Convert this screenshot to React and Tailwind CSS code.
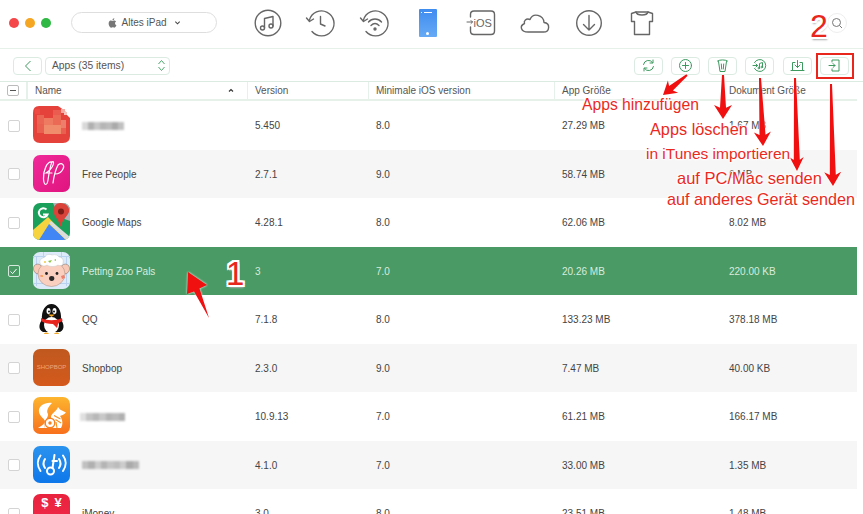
function Check({ checked }) {
  return (
    <div className={`w-[12px] h-[12px] rounded-[2px] border flex items-center justify-center ${checked ? "border-[#d7e8dd]" : "border-[#d4d4d4] bg-white"}`}>
      {checked && (
        <svg width="9" height="9" viewBox="0 0 9 9" fill="none" stroke="#fff" strokeWidth="1"><path d="M1.500 4.500 L3.600 6.600 L7.500 2" /></svg>
      )}
    </div>
  );
}

function Blur({ w, ml = 0, shades }) {
  return (
    <div className="h-[8px] flex blur-[1px]" style={{ width: w, marginLeft: ml }}>
      {shades.map((c, i) => (
        <div key={i} className="flex-1" style={{ background: c }} />
      ))}
    </div>
  );
}

const PixelIcon = () => (
  <svg viewBox="0 0 37 37" className="w-full h-full">
    <path d="M6 0H25L28 2L32 5L34 9L37 12V30Q37 37 30 37H7Q0 37 0 30V7Q0 0 6 0Z" fill="#e5423c" />
    <rect x="2" y="3" width="5" height="5" fill="#ee4a44" />
    <rect x="4" y="9" width="7" height="9" fill="#ea6553" />
    <rect x="4" y="18" width="7" height="9" fill="#e96050" />
    <rect x="11" y="12" width="9" height="7" fill="#ee7a62" />
    <rect x="20" y="9" width="8" height="10" fill="#ea6a56" />
    <rect x="11" y="19" width="18" height="9" fill="#f08c6c" />
    <rect x="28" y="14" width="5" height="8" fill="#ee7e6c" />
    <rect x="28" y="22" width="5" height="6" fill="#e96050" />
    <rect x="20" y="4" width="8" height="5" fill="#ea5b50" />
    <rect x="28" y="3" width="4" height="4" fill="#f4aaa0" />
    <rect x="31" y="6" width="3" height="3" fill="#f6c2bb" />
  </svg>
);
const FreePeople = () => (
  <svg viewBox="0 0 37 37" className="w-full h-full">
    <defs><linearGradient id="fp" x1="0" y1="0" x2="1" y2="1"><stop offset="0" stopColor="#f02a9a" /><stop offset="1" stopColor="#e0147f" /></linearGradient></defs>
    <rect width="37" height="37" rx="7" fill="url(#fp)" />
    <path d="M19 7C14 6 10 16 10.500 24C11 31 14 31 15 25C16 18 17 11 19 7C22 5 21 13 13 18H19M20 28C21 20 23 14 25 10C29 7 32 10 30 14C28 18 24 19 22 19" fill="none" stroke="#fff" strokeWidth="1.200" strokeLinecap="round" />
  </svg>
);
const GMaps = () => (
  <svg viewBox="0 0 37 37" className="w-full h-full">
    <defs><clipPath id="gm"><rect width="37" height="37" rx="7" /></clipPath></defs>
    <g clipPath="url(#gm)">
      <rect width="37" height="37" fill="#1ba05c" />
      <path d="M0 37V27L15 14L37 37Z" fill="#f6d33f" />
      <path d="M6 37L16 21L33 37Z" fill="#4285f4" />
      <path d="M18 18L37 34V37H33L16 20Z" fill="#dcdcdc" />
      <path d="M20 0H37V18L26 14Z" fill="#aeb4b8" />
      <path d="M27.500 0C22 0 20 5 20.500 9C21.500 14 26 17 27.500 24C29 17 34 14 36 9C37 4 33 0 27.500 0Z" fill="#d9433a" />
      <circle cx="28" cy="8.500" r="3" fill="#7c1d18" />
      <path d="M13.500 6.500A4.500 4.500 0 1 0 14.500 11.500H10" fill="none" stroke="#fff" strokeWidth="2" />
    </g>
  </svg>
);
const Sheep = () => (
  <svg viewBox="0 0 37 37" className="w-full h-full">
    <rect width="37" height="37" rx="7" fill="#dceafa" />
    <path d="M3 4h1v30H3zM10 0h1v8h-1zM28 0h1v8h-1zM33 4h1v30h-1zM0 31h37v1H0zM0 4h37v1H0z" fill="#b8d2f0" />
    <ellipse cx="5" cy="17" rx="4.500" ry="5" fill="#f7c8b6" stroke="#6b5b50" strokeWidth="0.400" transform="rotate(-25 5 17)" />
    <ellipse cx="32" cy="17" rx="4.500" ry="5" fill="#f7c8b6" stroke="#6b5b50" strokeWidth="0.400" transform="rotate(25 32 17)" />
    <ellipse cx="18.500" cy="22" rx="13.500" ry="12.500" fill="#fbcfbf" stroke="#8a7468" strokeWidth="0.400" />
    <path d="M7 11C6 7 10 6 12 5C13 2 17 2 19 3C22 2 25 3 26 5C29 5 31 8 30 11C30 14 26 14 25 13C22 15 17 15 14 13C11 15 8 14 7 11Z" fill="#fff" stroke="#bbb" strokeWidth="0.400" />
    <circle cx="13.500" cy="21.500" r="1.400" fill="#222" />
    <circle cx="24" cy="21.500" r="1.400" fill="#222" />
    <ellipse cx="18.700" cy="26.500" rx="2.600" ry="2.400" fill="#2a2a2a" />
    <path d="M6 24l3-1 1 2zM28 24l3-1 1 3-3 1z" fill="#ef7f6c" />
    <path d="M15 9l2 2 2-3zM21 8l2 1 0-2z" fill="#8bc34a" />
    <circle cx="12" cy="10" r="1" fill="#f3c744" />
    <circle cx="9" cy="24" r="1" fill="#f3a744" />
  </svg>
);
const QQ = () => (
  <svg viewBox="0 0 37 37" className="w-full h-full">
    <rect width="37" height="37" rx="7" fill="#fff" />
    <path d="M10 32C4 29 7 22 9 20C8 10 13 4 18.500 4C24 4 29 10 28 20C30 22 33 29 27 32Z" fill="#111" />
    <ellipse cx="18.500" cy="25" rx="7.500" ry="8" fill="#fff" />
    <ellipse cx="15.500" cy="11" rx="2" ry="3" fill="#fff" />
    <ellipse cx="21.500" cy="11" rx="2" ry="3" fill="#fff" />
    <circle cx="16" cy="11.500" r="1" fill="#111" />
    <circle cx="21" cy="11.500" r="1" fill="#111" />
    <path d="M15 14.500H22L18.500 17Z" fill="#f5a623" />
    <path d="M8 18C14 21 23 21 29 18L29.500 21C25 23 25 24 25 24L24 28L20 24C15 24 11 23 8 21Z" fill="#e8251f" />
    <path d="M11 34C11 32 15 32 16 34ZM21 34C22 32 26 32 26 34Z" fill="#f5a623" />
  </svg>
);
const Shopbop = () => (
  <div className="w-full h-full rounded-[7px] bg-gradient-to-b from-[#c0591f] to-[#d4591c] flex items-center justify-center text-[6px] text-[#eda67c] font-['Liberation_Sans',sans-serif]">SHOPBOP</div>
);
const UC = () => (
  <svg viewBox="0 0 37 37" className="w-full h-full">
    <defs><linearGradient id="uc" x1="0" y1="0" x2="0" y2="1"><stop offset="0" stopColor="#fdb52e" /><stop offset="1" stopColor="#f8701d" /></linearGradient></defs>
    <rect width="37" height="37" rx="7" fill="url(#uc)" />
    <path d="M19 6C12 5 5 9 6 15C7 20 11 21 12 24C12 27 8 29 5 31H12C9 26 16 20 15 17C13 14 15 10 19 6Z" fill="#fff" />
    <path d="M18 19C20 15 24 14 25 10L27 12.500L33 15.500C31 18 28 18.500 27 19C30 23 30 28 28 31H12C10 27 13 22 18 22Z" fill="#fff" />
    <circle cx="17" cy="26" r="4.800" fill="#fff" stroke="#f8801f" strokeWidth="1.400" />
    <circle cx="17" cy="26" r="1.700" fill="#f8801f" />
    <path d="M21 18.500L27.500 22M22.500 22.500L28 26M23 25L24 31" stroke="#f8901f" strokeWidth="1.100" />
  </svg>
);
const Wifi = () => (
  <svg viewBox="0 0 37 37" className="w-full h-full">
    <defs><linearGradient id="wf" x1="0" y1="0" x2="0" y2="1"><stop offset="0" stopColor="#2a92ee" /><stop offset="1" stopColor="#0f78ea" /></linearGradient></defs>
    <rect width="37" height="37" rx="7" fill="url(#wf)" />
    <g fill="none" stroke="#fff" strokeWidth="2" strokeLinecap="round">
      <circle cx="17.500" cy="25" r="3.500" />
      <path d="M19.500 22L21.500 9M19.500 15H24" />
      <path d="M12 13C10 16 10 19 12 22M7.500 9.500C4 14 4 20 7.500 25M26 13C28 16 28 19 26 22M30 9.500C33.500 14 33.500 20 30 25" />
    </g>
  </svg>
);
const IMoney = () => (
  <div className="w-full h-full rounded-[7px] bg-gradient-to-b from-[#e9223e] to-[#f02a4a] flex justify-center gap-[6px] pt-[1px] text-white font-bold text-[13px] leading-[15px] font-['Liberation_Sans',sans-serif]"><span>$</span><span>¥</span></div>
);

const rows = [
  { icon: <PixelIcon />, blur: <Blur w={42} shades={["#d8d8d8", "#b0b0b0", "#c8c8c8", "#b5b5b5", "#bcbcbc", "#aaaaaa", "#c0c0c0"]} />, v: "5.450", m: "8.0", a: "27.29 MB", d: "1.67 MB" },
  { icon: <FreePeople />, name: "Free People", v: "2.7.1", m: "9.0", a: "58.74 MB", d: "6 MB", alt: true },
  { icon: <GMaps />, name: "Google Maps", v: "4.28.1", m: "8.0", a: "62.06 MB", d: "8.02 MB" },
  { icon: <Sheep />, name: "Petting Zoo Pals", v: "3", m: "7.0", a: "20.26 MB", d: "220.00 KB", sel: true },
  { icon: <QQ />, name: "QQ", v: "7.1.8", m: "8.0", a: "133.23 MB", d: "378.18 MB" },
  { icon: <Shopbop />, name: "Shopbop", v: "2.3.0", m: "9.0", a: "7.47 MB", d: "40.00 KB", alt: true },
  { icon: <UC />, blur: <Blur w={45} ml={-2} shades={["#e0e0e0", "#c4c4c4", "#b8b8b8", "#c8c8c8", "#b4b4b4", "#bcbcbc", "#b0b0b0"]} />, v: "10.9.13", m: "7.0", a: "61.21 MB", d: "166.17 MB" },
  { icon: <Wifi />, blur: <Blur w={57} shades={["#c0c0c0", "#b0b0b0", "#cccccc", "#b4b4b4", "#c4c4c4", "#bcbcbc", "#cccccc", "#aaaaaa", "#b8b8b8"]} />, v: "4.1.0", m: "7.0", a: "33.00 MB", d: "1.35 MB", alt: true },
  { icon: <IMoney />, name: "iMoney", v: "3.0", m: "8.0", a: "23.51 MB", d: "1.48 MB" },
];

const Stroke = ({ children }) => (
  <svg width="32" height="32" viewBox="0 0 32 32" fill="none" stroke="#666" strokeWidth="1.400" strokeLinecap="round" strokeLinejoin="round">{children}</svg>
);

const TopSlot = ({ children }) => (
  <div className="w-[53.500px] shrink-0 flex items-center justify-center">{children}</div>
);

function TopIcons() {
  return (
    <div className="flex items-center ml-[24px]">
      <TopSlot><Stroke>
        <circle cx="16" cy="16" r="12.800" />
        <path d="M12.500 21V11.500L21 9.500V19" />
        <circle cx="10.500" cy="21" r="2" /><circle cx="19" cy="19" r="2" />
      </Stroke></TopSlot>
      <TopSlot><Stroke>
        <path d="M4.500 13A12.500 12.500 0 1 1 7 24.500" /><path d="M1.500 11L4.500 14.500L8.500 12" />
        <path d="M15.500 9.500V17L20 19" />
      </Stroke></TopSlot>
      <TopSlot><Stroke>
        <path d="M4.500 13A12.500 12.500 0 1 1 7 24.500" /><path d="M1.500 11L4.500 14.500L8.500 12" />
        <path d="M9.500 15C13 11 19 11 22.500 15M12 18.500C14.500 16 17.500 16 20 18.500" />
        <circle cx="16" cy="22" r="1" fill="#666" />
      </Stroke></TopSlot>
      <TopSlot>
        <div className="w-[18px] h-[28px] rounded-[1px] bg-gradient-to-b from-[#3f8cf0] to-[#66aaf5] relative">
          <div className="absolute top-[3px] left-[5px] w-[8px] h-[1px] bg-white" />
          <div className="absolute top-[3px] left-[2px] w-[1px] h-[1px] bg-white" />
          <div className="absolute bottom-[2px] left-[7px] w-[3px] h-[3px] rounded-full bg-white" />
        </div>
      </TopSlot>
      <TopSlot><Stroke>
        <path d="M4.500 10V7.500Q4.500 4 8 4H25Q28.500 4 28.500 7.500V24Q28.500 27.500 25 27.500H8Q4.500 27.500 4.500 24V20" />
        <path d="M1 15H6.500M5 13.500L6.500 15L5 16.500" strokeWidth="1" />
        <text x="7.500" y="19.500" fill="#666" stroke="none" fontSize="11" fontFamily="Liberation Sans">iOS</text>
      </Stroke></TopSlot>
      <TopSlot><Stroke>
        <path d="M9 25H24.500C31 25 31.500 16 25 15.500C24.500 8 14 5 11 12.500C7 11 4.500 14 5.500 16.500C0 19 2 25 9 25Z" />
      </Stroke></TopSlot>
      <TopSlot><Stroke>
        <circle cx="16" cy="16" r="12.300" />
        <path d="M16 8.500V23M10.500 17.500L16 23L21.500 17.500" />
      </Stroke></TopSlot>
      <TopSlot><Stroke>
        <path d="M10 5H22L26.500 6.500V14.500H23.500V27.500H8.500V14.500H5.500V6.500Z" />
        <path d="M10 5C11 9 21 9 22 5" />
      </Stroke></TopSlot>
    </div>
  );
}

const G = "#3c9a5f";
const ToolBtn = ({ children }) => (
  <div className="w-[29px] h-[18px] rounded-[4px] border border-[#dcebe2] bg-white flex items-center justify-center shrink-0">
    {children}
  </div>
);
const Gs = ({ children }) => (
  <svg width="15" height="15" viewBox="0 0 15 15" fill="none" stroke={G} strokeWidth="1" strokeLinecap="round" strokeLinejoin="round">{children}</svg>
);

const Label = ({ x, y, size, children }) => (
  <div className="absolute whitespace-nowrap text-[#ea2a1e] leading-[18px] [text-shadow:0_0_2px_#fff,1px_1px_2px_#fff,-1px_-1px_2px_#fff,1px_-1px_2px_#fff,-1px_1px_2px_#fff]" style={{ left: x, top: y, fontSize: size }}>{children}</div>
);

const arrow = (x1, y1, x2, y2, w0, w1, hw, hl) => {
  const dx = x2 - x1, dy = y2 - y1, l = Math.hypot(dx, dy), ux = dx / l, uy = dy / l, nx = -uy, ny = ux;
  const bx = x2 - ux * hl, by = y2 - uy * hl;
  const ix = x2 - ux * hl * 0.8, iy = y2 - uy * hl * 0.8;
  const pt = (x, y) => `${x.toFixed(1)} ${y.toFixed(1)}`;
  return `M${pt(x1 + (nx * w0) / 2, y1 + (ny * w0) / 2)}L${pt(ix + (nx * w1) / 2, iy + (ny * w1) / 2)}L${pt(bx + nx * hw, by + ny * hw)}L${pt(x2, y2)}L${pt(bx - nx * hw, by - ny * hw)}L${pt(ix - (nx * w1) / 2, iy - (ny * w1) / 2)}L${pt(x1 - (nx * w0) / 2, y1 - (ny * w0) / 2)}Z`;
};

const bigShadow = "[text-shadow:2px_0_0_#fff,-2px_0_0_#fff,0_2px_0_#fff,0_-2px_0_#fff,2px_2px_0_#fff,-2px_-2px_0_#fff,2px_-2px_0_#fff,-2px_2px_0_#fff,1px_3px_2px_#aaa]";

export default function App() {
  return (
    <div className="w-[863px] h-[514px] overflow-hidden bg-white relative text-[#444] font-['Liberation_Sans',sans-serif] flex flex-col">
      {/* top bar */}
      <div className="h-[49px] shrink-0 flex items-center pl-[9px] pr-[16px] pb-[3px] border-b border-[#e6f1ea]">
        <div className="flex gap-[6px]">
          <div className="w-[10px] h-[10px] rounded-full bg-[#f5474a]" />
          <div className="w-[10px] h-[10px] rounded-full bg-[#f5a623]" />
          <div className="w-[10px] h-[10px] rounded-full bg-[#2fb843]" />
        </div>
        <div className="ml-[20px] w-[146px] h-[21px] rounded-full border border-[#dedede] flex items-center justify-center gap-[3px] text-[10px] text-[#555]">
          <svg width="11" height="12" viewBox="0 0 24 24" fill="#777"><path d="M17.500 12.500c0-2.600 2.100-3.800 2.200-3.900-1.200-1.800-3.100-2-3.700-2-1.600-.2-3.100.9-3.900.9s-2.100-.9-3.400-.9c-1.700 0-3.400 1-4.300 2.600-1.800 3.200-.5 7.900 1.300 10.500.9 1.300 1.900 2.700 3.300 2.600 1.300-.1 1.800-.8 3.400-.8s2 .8 3.400.8 2.300-1.300 3.200-2.600c1-1.500 1.400-2.900 1.400-3-.1 0-2.900-1.100-2.900-4.200zM14.900 4.700c.7-.9 1.200-2.100 1.100-3.300-1 0-2.300.7-3 1.500-.7.800-1.300 2-1.100 3.200 1.100.1 2.300-.6 3-1.400z" /></svg>
          <span>Altes iPad</span>
          <svg width="7" height="7" viewBox="0 0 8 8" fill="none" stroke="#444" strokeWidth="1.200" className="ml-[4px]"><path d="M1.500 3L4 5.500L6.500 3" /></svg>
        </div>
        <TopIcons />
        <div className="ml-auto w-[20px] h-[20px] rounded-full border border-[#eee] flex items-center justify-center">
          <svg width="12" height="12" viewBox="0 0 12 12" fill="none" stroke="#777" strokeWidth="1"><circle cx="5.500" cy="5.500" r="4" /><path d="M8.500 8.500L11 11" /></svg>
        </div>
      </div>

      {/* second bar */}
      <div className="h-[33px] shrink-0 flex items-center pl-[13px] pr-[14px] pt-[1px] border-b border-[#dcebe2]">
        <div className="w-[29px] h-[18px] rounded-[4px] border border-[#dcebe2] flex items-center justify-center">
          <svg width="8" height="12" viewBox="0 0 8 12" fill="none" stroke={G} strokeWidth="1"><path d="M6.500 1L1.500 6L6.500 11" /></svg>
        </div>
        <div className="ml-[3px] w-[125px] h-[18px] rounded-[4px] border border-[#dcebe2] flex items-center justify-between pl-[6px] pr-[3px] text-[10.300px] text-[#555]">
          <span>Apps (35 items)</span>
          <svg width="9" height="13" viewBox="0 0 9 13" fill="none" stroke={G} strokeWidth="0.900"><path d="M1.500 5L4.500 1.500L7.500 5M1.500 8L4.500 11.500L7.500 8" /></svg>
        </div>
        <div className="ml-auto flex gap-[8.300px]">
          <ToolBtn><Gs><path d="M2.500 6.500A5 5 0 0 1 11.500 4.500M12.500 8.500A5 5 0 0 1 3.500 10.500" /><path d="M12 2V5H9M3 13V10H6" /></Gs></ToolBtn>
          <ToolBtn><Gs><circle cx="7.500" cy="7.500" r="6" /><path d="M7.500 4.500V10.500M4.500 7.500H10.500" /></Gs></ToolBtn>
          <ToolBtn><Gs><path d="M2.500 3C5 1.500 10 1.500 12.500 3M3.500 3.500L5 13.500H10L11.500 3.500M6.300 6L6.700 11M8.700 6L8.300 11" /></Gs></ToolBtn>
          <ToolBtn><Gs><path d="M2.500 4.500A6 6 0 1 1 2.500 10.500M1 7.500H5.500M4 6L5.500 7.500L4 9" /><path d="M7.500 10V5.500L10.500 4.500V9" /><circle cx="6.800" cy="10" r="0.800" /><circle cx="9.800" cy="9" r="0.800" /></Gs></ToolBtn>
          <ToolBtn><Gs><path d="M1 12.500H14M2.500 12.500V4.500H5M12.500 12.500V4.500H10M7.500 2.500V9.500M5 7L7.500 9.500L10 7" /></Gs></ToolBtn>
          <ToolBtn><Gs><path d="M5 4V2H12V13H5V11M2 7.500H8M6 5.500L8 7.500L6 9.500" /></Gs></ToolBtn>
        </div>
      </div>

      {/* header */}
      <div className="h-[19px] shrink-0 flex items-stretch text-[10px] text-[#555] border-b-[2px] border-[#e6f1ea] w-[857px]">
        <div className="w-[28px] flex items-center justify-center pr-[1px] border-r-[2px] border-[#e6f1ea]">
          <div className="w-[12px] h-[11px] rounded-[2px] border border-[#bbb] flex items-center justify-center"><div className="w-[6px] h-[1px] bg-[#555]" /></div>
        </div>
        <div className="w-[220px] pl-[7px] flex items-center justify-between pr-[13px] border-r border-[#e6f1ea]">
          <span>Name</span>
          <svg width="6" height="5" viewBox="0 0 6 5" fill="none" stroke="#333" strokeWidth="1.200"><path d="M1 3.500L3 1.500L5 3.500" /></svg>
        </div>
        <div className="w-[121px] pl-[7px] flex items-center border-r border-[#e6f1ea]">Version</div>
        <div className="w-[186px] pl-[7px] flex items-center border-r border-[#e6f1ea]">Minimale iOS version</div>
        <div className="w-[168px] pl-[7px] flex items-center">App Größe</div>
        <div className="flex-1 pl-[6px] flex items-center">Dokument Größe</div>
      </div>

      {/* rows */}
      <div className="w-[857px]">
        {rows.map((r, i) => {
          const c = r.sel ? "text-[#d8ecdf] pt-[1px]" : "pt-[1px]";
          return (
            <div key={i} className={`h-[48.500px] flex items-center text-[10px] ${r.sel ? "bg-[#4a9a65]" : r.alt ? "bg-[#f6f6f6] text-[#444]" : "bg-white text-[#444]"}`}>
              <div className="w-[28px] flex justify-center pr-[1px] pt-[1px]"><Check checked={r.sel} /></div>
              <div className="w-[220px] flex items-center pl-[5px]">
                <div className="w-[37px] h-[37px] shrink-0 -mt-[1px]">{r.icon}</div>
                <div className={`ml-[12px] ${c}`}>{r.name || r.blur}</div>
              </div>
              <div className={`w-[121px] pl-[7px] ${c}`}>{r.v}</div>
              <div className={`w-[186px] pl-[7px] ${c}`}>{r.m}</div>
              <div className={`w-[168px] pl-[7px] ${c}`}>{r.a}</div>
              <div className={`flex-1 pl-[6px] ${c}`}>{r.d}</div>
            </div>
          );
        })}
      </div>

      {/* annotations */}
      <div className="absolute left-[816px] top-[53px] w-[38px] h-[26px] border-[2.500px] border-[#e8261c]" />
      <svg className="absolute left-0 top-0 pointer-events-none" width="863" height="514" style={{ filter: "drop-shadow(0 0 1px #fff)" }}>
        <g fill="#f01010">
          <path d={arrow(687, 75, 663, 95, 2, 6, 8, 13)} />
          <path d={arrow(723, 75, 723, 119, 2, 6, 9, 14)} />
          <path d={arrow(760, 78, 763, 146, 2, 6, 8.500, 14)} />
          <path d={arrow(795, 78, 797, 171, 2, 6, 7, 14)} />
          <path d={arrow(831, 84, 833, 186, 2, 6, 8.500, 14)} />
          <path d="M188 272L207 285L199.500 288.500L209 318L194 291.500L187 294Z" />
        </g>
      </svg>
      <Label x={582} y={96} size={15.7}>Apps hinzufügen</Label>
      <Label x={650} y={120} size={16.3}>Apps löschen</Label>
      <Label x={646} y={145} size={15.5}>in iTunes importieren</Label>
      <Label x={677} y={169} size={16.5}>auf PC/Mac senden</Label>
      <Label x={667} y={190} size={16.2}>auf anderes Gerät senden</Label>
      <div className={`absolute left-[226px] top-[255px] text-[33px] leading-[38px] text-[#e8261c] ${bigShadow}`}>1</div>
      <div className={`absolute left-[810px] top-[9px] text-[32px] leading-[34px] text-[#e8261c] ${bigShadow}`}>2</div>
    </div>
  );
}
